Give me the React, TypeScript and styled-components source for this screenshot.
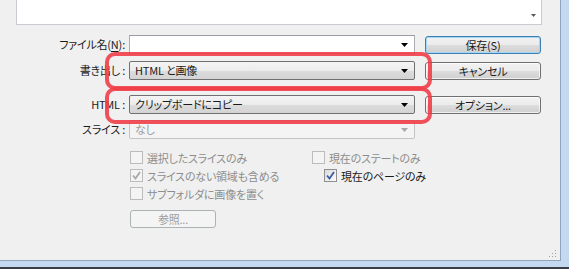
import React from 'react';
import styled, { createGlobalStyle, css } from 'styled-components';

const GlobalStyle = createGlobalStyle`
  html, body {
    margin: 0;
    padding: 0;
    background: #f0f0f0;
  }
  body {
    font-family: "Noto Sans CJK JP", "Noto Sans", sans-serif;
    font-size: 11px;
    letter-spacing: -0.2px;
    font-feature-settings: "palt";
    color: #1a1a1a;
  }
`;

const Window = styled.div`
  width: 569px;
  height: 269px;
  box-sizing: border-box;
  display: flex;
  background: #c4d8ef;
  padding: 0 8px 6px 0;
  border-bottom: 2px solid #3a3f47;
`;

const Panel = styled.div`
  position: relative;
  flex: 1;
  background: #f0f0f0;
  border-right: 1px solid #8ea4bf;
  border-bottom: 1px solid #8ea4bf;
  display: flex;
  flex-direction: column;
`;

const ListBox = styled.div`
  margin-left: 16px;
  width: 526px;
  height: 25px;
  box-sizing: border-box;
  background: #fff;
  border: 1px solid #c9cbd0;
  border-top: none;
  display: flex;
  justify-content: flex-end;
  align-items: flex-end;
  padding: 0 5px 7px 0;
`;

const Form = styled.div`
  display: flex;
  flex-direction: column;
  margin-top: 10px;
`;

const Row = styled.div<{ $gap: number }>`
  display: flex;
  align-items: center;
  height: 19px;
  margin-top: ${p => p.$gap}px;
`;

const Label = styled.div`
  width: 125px;
  margin-right: 4px;
  text-align: right;
  white-space: nowrap;
  line-height: 19px;
  u {
    text-decoration: underline;
    text-underline-offset: 2px;
  }
`;

const Combo = styled.div<{ $kind: 'edit' | 'select' | 'disabled' }>`
  width: 286px;
  height: 19px;
  box-sizing: border-box;
  display: flex;
  align-items: center;
  padding: 0 6px 0 5px;
  border-radius: 2px;
  ${p =>
    p.$kind === 'edit' &&
    css`
      background: #fff;
      border: 1px solid #abadb3;
      border-top-color: #9a9ca3;
      border-radius: 0;
    `}
  ${p =>
    p.$kind === 'select' &&
    css`
      background: linear-gradient(#f4f4f4 0%, #ececec 50%, #dcdcdc 51%, #d4d4d4 100%);
      border: 1px solid #707070;
    `}
  ${p =>
    p.$kind === 'disabled' &&
    css`
      background: #f4f4f4;
      border: 1px solid #c2c4c8;
      color: #9b9b9b;
    `}
`;

const ComboText = styled.span`
  flex: 1;
  white-space: nowrap;
  line-height: 17px;
`;

const Arrow = ({ color = '#000' }: { color?: string }) => (
  <svg width="7" height="4" viewBox="0 0 7 4">
    <path d="M0 0H7L3.5 4Z" fill={color} />
  </svg>
);

const SmallArrow = () => (
  <svg width="5" height="3" viewBox="0 0 5 3">
    <path d="M0 0H5L2.5 3Z" fill="#5a5a5a" />
  </svg>
);

const Button = styled.div<{ $default?: boolean; $disabled?: boolean; $width?: number; $flush?: boolean }>`
  width: ${p => p.$width ?? 116}px;
  height: 18px;
  box-sizing: border-box;
  margin-left: ${p => (p.$flush ? 0 : 10)}px;
  display: flex;
  align-items: center;
  justify-content: center;
  border: 1px solid #707070;
  border-radius: 3px;
  background: linear-gradient(#f2f2f2 0%, #ebebeb 50%, #dddddd 51%, #cfcfcf 100%);
  box-shadow: inset 0 0 0 1px rgba(255, 255, 255, 0.7);
  white-space: nowrap;
  ${p =>
    p.$default &&
    css`
      border-color: #3c7fb1;
      box-shadow: inset 0 0 0 1px #a6d6f5;
    `}
  ${p =>
    p.$disabled &&
    css`
      border-color: #adb2b5;
      background: #f4f4f4;
      color: #9d9d9d;
      box-shadow: none;
    `}
`;

const Options = styled.div`
  display: grid;
  grid-template-columns: 182px auto;
  grid-auto-rows: 17px;
  row-gap: 1px;
  margin: 10px 0 0 130px;
`;

const CheckItem = styled.div<{ $disabled?: boolean; $indent?: number }>`
  display: flex;
  align-items: center;
  gap: 4px;
  padding-left: ${p => p.$indent ?? 0}px;
  white-space: nowrap;
  color: ${p => (p.$disabled ? '#8d8d8d' : '#1a1a1a')};
`;

const Box = styled.span<{ $disabled?: boolean }>`
  width: 13px;
  height: 13px;
  box-sizing: border-box;
  display: flex;
  align-items: center;
  justify-content: center;
  border: 1px solid ${p => (p.$disabled ? '#bcbcbc' : '#8e8f8f')};
  background: ${p =>
    p.$disabled ? '#f4f4f4' : 'linear-gradient(135deg, #dcdcdc, #fbfbfb)'};
`;

const Check = ({ color }: { color: string }) => (
  <svg width="9" height="9" viewBox="0 0 9 9">
    <path d="M1 4.5L3.5 7.5L8 1" fill="none" stroke={color} strokeWidth="1.8" />
  </svg>
);

function CheckBox({
  label,
  checked,
  disabled,
  indent,
}: {
  label: string;
  checked?: boolean;
  disabled?: boolean;
  indent?: number;
}) {
  return (
    <CheckItem $disabled={disabled} $indent={indent}>
      <Box $disabled={disabled}>
        {checked && <Check color={disabled ? '#a8a8a8' : '#3b5aa5'} />}
      </Box>
      {label}
    </CheckItem>
  );
}

const BrowseRow = styled.div`
  margin: 8px 0 0 130px;
`;

const Grip = styled.div`
  position: absolute;
  right: 4px;
  bottom: 3px;
  width: 8px;
  height: 8px;
  background-image: radial-gradient(circle, #9aa0a8 0.7px, transparent 1px);
  background-size: 3px 3px;
  clip-path: polygon(100% 0, 100% 100%, 0 100%);
`;

const Highlight = styled.div<{ $top: number; $height: number }>`
  position: absolute;
  left: 105px;
  top: ${p => p.$top}px;
  width: 327px;
  height: ${p => p.$height}px;
  box-sizing: border-box;
  border: 4px solid rgba(240, 62, 72, 0.9);
  border-radius: 10px;
  pointer-events: none;
`;

export default function App() {
  return (
    <>
      <GlobalStyle />
      <Window>
        <Panel>
          <ListBox>
            <SmallArrow />
          </ListBox>
          <Form>
            <Row $gap={0}>
              <Label>
                ファイル名(<u>N</u>):
              </Label>
              <Combo $kind="edit">
                <ComboText />
                <Arrow />
              </Combo>
              <Button $default>保存(S)</Button>
            </Row>
            <Row $gap={7}>
              <Label>書き出し :</Label>
              <Combo $kind="select">
                <ComboText>HTML と画像</ComboText>
                <Arrow />
              </Combo>
              <Button>キャンセル</Button>
            </Row>
            <Row $gap={15}>
              <Label>HTML :</Label>
              <Combo $kind="select">
                <ComboText>クリップボードにコピー</ComboText>
                <Arrow />
              </Combo>
              <Button>オプション...</Button>
            </Row>
            <Row $gap={6}>
              <Label>スライス :</Label>
              <Combo $kind="disabled">
                <ComboText>なし</ComboText>
                <Arrow color="#a8a8a8" />
              </Combo>
            </Row>
          </Form>
          <Options>
            <CheckBox label="選択したスライスのみ" disabled />
            <CheckBox label="現在のステートのみ" disabled />
            <CheckBox label="スライスのない領域も含める" checked disabled />
            <CheckBox label="現在のページのみ" checked indent={12} />
            <CheckBox label="サブフォルダに画像を置く" disabled />
          </Options>
          <BrowseRow>
            <Button $disabled $width={86} $flush>
              参照...
            </Button>
          </BrowseRow>
          <Highlight $top={52} $height={38} />
          <Highlight $top={87} $height={37} />
          <Grip />
        </Panel>
      </Window>
    </>
  );
}
